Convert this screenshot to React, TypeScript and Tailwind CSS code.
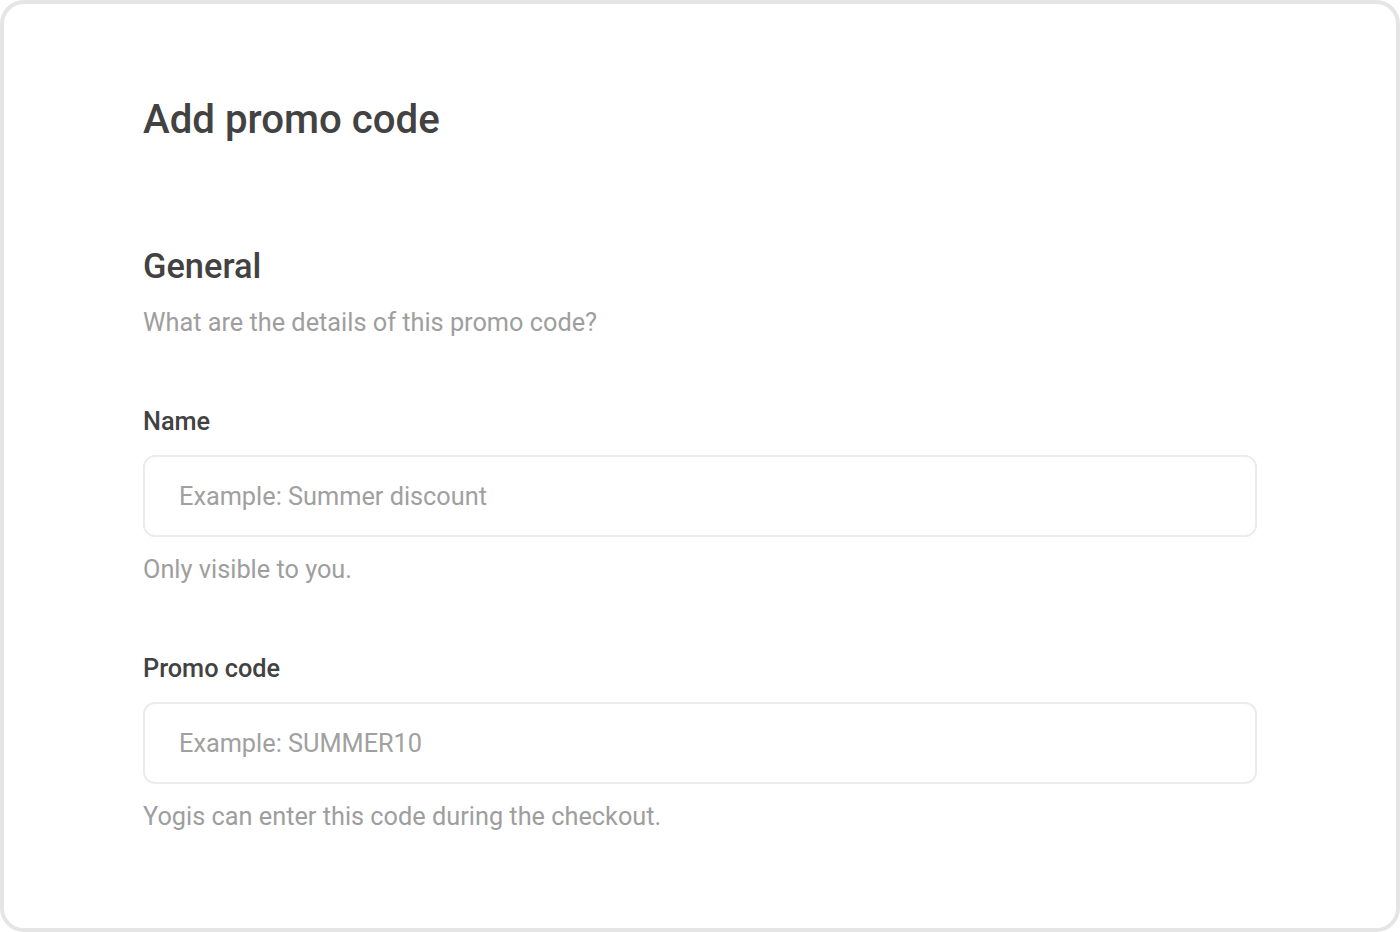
export default function App() {
  const fields = [
    { label: "Name", placeholder: "Example: Summer discount", help: "Only visible to you." },
    { label: "Promo code", placeholder: "Example: SUMMER10", help: "Yogis can enter this code during the checkout." },
  ];

  return (
    <div
      className="w-[1400px] h-[932px] bg-white"
      style={{ fontFamily: "Roboto, 'Noto Sans', sans-serif" }}
    >
      <div className="h-full border-4 border-[#e5e5e5] rounded-[24px] px-[139px] pt-[92px]">
        <h1 className="text-[40.2px] leading-[48px] font-medium text-[#424242]">Add promo code</h1>

        <h2 className="mt-[102px] text-[34.4px] leading-[40px] font-medium text-[#424242]">General</h2>
        <p className="mt-[22px] text-[25.3px] leading-[30px] text-[#9e9e9e]">
          What are the details of this promo code?
        </p>

        {fields.map((f) => (
          <div key={f.label} className="mt-[69px]">
            <label className="block text-[25.3px] leading-[30px] font-medium text-[#424242]">{f.label}</label>
            <input
              placeholder={f.placeholder}
              className="mt-[18px] block w-full h-[82px] rounded-[12px] border-2 border-[#ececec] px-[34px] text-[25.3px] text-[#333333] placeholder:text-[#a0a0a0] outline-none"
            />
            <p className="mt-[18px] text-[25.3px] leading-[30px] text-[#9e9e9e]">{f.help}</p>
          </div>
        ))}
      </div>
    </div>
  );
}
